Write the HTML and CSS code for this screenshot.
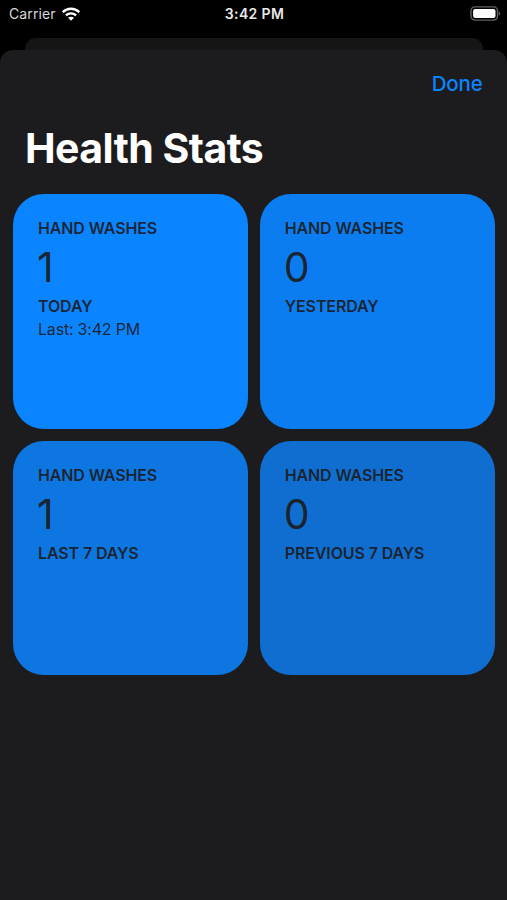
FILE: index.html
```html
<!DOCTYPE html>
<html lang="en">
<head>
  <meta charset="UTF-8">
  <title>Health Stats</title>
  <link rel="stylesheet" href="styles.css">
</head>
<body>
  <header class="status-bar">
    <div class="carrier">
      <span>Carrier</span>
      <svg class="wifi" viewBox="0 0 18 14" fill="none" stroke="#fff" stroke-width="2.3">
        <path d="M0.8 5.2C5.4 0.6 12.6 0.6 17.2 5.2" />
        <path d="M3.9 8.4C6.8 5.6 11.2 5.6 14.1 8.4" />
        <path d="M9 13.8L6 10.8C7.7 9.3 10.3 9.3 12 10.8Z" fill="#fff" stroke="none" />
      </svg>
    </div>
    <span class="clock">3:42 PM</span>
    <svg class="battery" viewBox="0 0 31 15">
      <rect x="1" y="0.9" width="26.5" height="13.2" rx="4" fill="none" stroke="#626264" stroke-width="1.4" />
      <rect x="3.1" y="2.9" width="22.4" height="9.2" rx="2" fill="#fff" />
      <path d="M28.8 5.2C30.7 6 30.7 9 28.8 9.8Z" fill="#626264" />
    </svg>
  </header>

  <div class="back-sheet"></div>
  <main class="sheet">
    <button class="done">Done</button>
    <h1>Health Stats</h1>
    <div class="stats">
      <section class="card today">
        <h2>HAND WASHES</h2>
        <p class="count">1</p>
        <h3>TODAY</h3>
        <p class="last">Last: 3:42 PM</p>
      </section>
      <section class="card yesterday">
        <h2>HAND WASHES</h2>
        <p class="count">0</p>
        <h3>YESTERDAY</h3>
      </section>
      <section class="card last-week">
        <h2>HAND WASHES</h2>
        <p class="count">1</p>
        <h3>LAST 7 DAYS</h3>
      </section>
      <section class="card previous-week">
        <h2>HAND WASHES</h2>
        <p class="count">0</p>
        <h3>PREVIOUS 7 DAYS</h3>
      </section>
    </div>
  </main>
</body>
</html>
```
FILE: styles.css
```css
* {
  margin: 0;
  padding: 0;
  box-sizing: border-box;
}

body {
  display: flex;
  flex-direction: column;
  height: 100vh;
  overflow: hidden;
  background: #000;
  color: #fff;
  font-family: Inter, "Liberation Sans", sans-serif;
}

.status-bar {
  display: grid;
  grid-template-columns: 1fr auto 1fr;
  align-items: center;
  height: 38px;
  padding: 0 7px 11px 9px;
  font-size: 14px;
  line-height: 20px;
}

.carrier {
  display: flex;
  align-items: center;
  gap: 6px;
  color: #d8d8d8;
  letter-spacing: 0.1px;
}

.wifi {
  width: 18px;
  height: 14px;
}

.clock {
  font-weight: 600;
  letter-spacing: 0.35px;
  color: #e8e8e8;
}

.battery {
  justify-self: end;
  width: 31px;
  height: 15px;
  margin-right: -1px;
}

/* edge of the screen behind the sheet */
.back-sheet {
  height: 12px;
  margin: 0 24px 0 25px;
  border-radius: 11px 11px 0 0;
  background: #151516;
}

.sheet {
  flex: 1;
  display: flex;
  flex-direction: column;
  padding: 20px 12.5px 0 13px;
  border-radius: 13px 13px 0 0;
  background: #1c1c1e;
}

.done {
  align-self: flex-end;
  margin-right: 12px;
  border: none;
  background: none;
  color: #0a84ff;
  font: 500 20.5px/28px Inter, sans-serif;
  letter-spacing: -0.2px;
}

h1 {
  margin: 24px 0 20px 12px;
  font-size: 41px;
  line-height: 52px;
  font-weight: 700;
  letter-spacing: -0.55px;
}

.stats {
  display: grid;
  grid-template-columns: 1fr 1fr;
  gap: 12px;
}

.card {
  height: 234.7px;
  padding: 24px 25px;
  border-radius: 31px;
  color: rgba(28, 28, 30, 0.92);
}

.card h2,
.card h3 {
  font-size: 16px;
  line-height: 20px;
  font-weight: 600;
  letter-spacing: -0.12px;
}

.count {
  font-size: 41px;
  line-height: 49px;
  font-weight: 400;
  letter-spacing: -1px;
  margin: 5px 0 4px -1px;
}

.last {
  margin-top: 3px;
  font-size: 16px;
  line-height: 20px;
  letter-spacing: -0.2px;
}

.today {
  background: #0a84ff;
}

.yesterday {
  background: #0c7df0;
}

.last-week {
  background: #0d76e0;
}

.previous-week {
  background: #0f6ed0;
}
```
